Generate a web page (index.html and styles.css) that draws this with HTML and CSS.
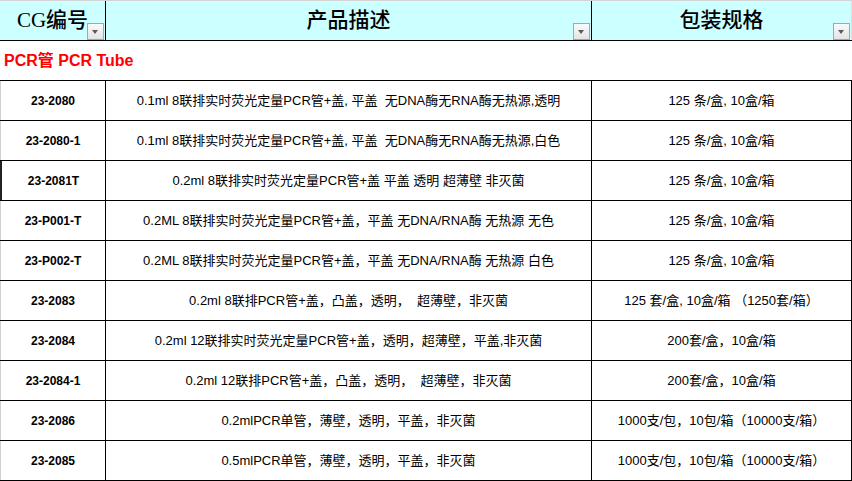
FILE: index.html
```html
<!DOCTYPE html>
<html lang="zh">
<head>
<meta charset="utf-8">
<title>PCR Tube</title>
<link rel="stylesheet" href="styles.css">
</head>
<body>
<div class="sheet">
  <div class="row head">
    <div class="cell c1"><span>CG编号</span><i class="dd"></i></div>
    <div class="cell c2"><span>产品描述</span><i class="dd"></i></div>
    <div class="cell c3"><span>包装规格</span><i class="dd"></i></div>
  </div>
  <div class="row title"><div class="cell span">PCR管 PCR Tube</div></div>
  <div class="row"><div class="cell c1 code">23-2080</div><div class="cell c2">0.1ml 8联排实时荧光定量PCR管+盖, 平盖&nbsp; 无DNA酶无RNA酶无热源,透明</div><div class="cell c3">125 条/盒, 10盒/箱</div></div>
  <div class="row"><div class="cell c1 code">23-2080-1</div><div class="cell c2">0.1ml 8联排实时荧光定量PCR管+盖, 平盖&nbsp; 无DNA酶无RNA酶无热源,白色</div><div class="cell c3">125 条/盒, 10盒/箱</div></div>
  <div class="row"><div class="cell c1 code dark">23-2081T</div><div class="cell c2">0.2ml 8联排实时荧光定量PCR管+盖 平盖 透明 超薄壁 非灭菌</div><div class="cell c3">125 条/盒, 10盒/箱</div></div>
  <div class="row"><div class="cell c1 code">23-P001-T</div><div class="cell c2">0.2ML 8联排实时荧光定量PCR管+盖，平盖 无DNA/RNA酶 无热源 无色</div><div class="cell c3">125 条/盒, 10盒/箱</div></div>
  <div class="row"><div class="cell c1 code">23-P002-T</div><div class="cell c2">0.2ML 8联排实时荧光定量PCR管+盖，平盖 无DNA/RNA酶 无热源 白色</div><div class="cell c3">125 条/盒, 10盒/箱</div></div>
  <div class="row"><div class="cell c1 code">23-2083</div><div class="cell c2">0.2ml 8联排PCR管+盖，凸盖，透明，&nbsp; 超薄壁，非灭菌</div><div class="cell c3">125 套/盒, 10盒/箱 （1250套/箱）</div></div>
  <div class="row"><div class="cell c1 code">23-2084</div><div class="cell c2">0.2ml 12联排实时荧光定量PCR管+盖，透明，超薄壁，平盖,非灭菌</div><div class="cell c3">200套/盒，10盒/箱</div></div>
  <div class="row"><div class="cell c1 code">23-2084-1</div><div class="cell c2">0.2ml 12联排PCR管+盖，凸盖，透明，&nbsp; 超薄壁，非灭菌</div><div class="cell c3">200套/盒，10盒/箱</div></div>
  <div class="row"><div class="cell c1 code">23-2086</div><div class="cell c2">0.2mlPCR单管，薄壁，透明，平盖，非灭菌</div><div class="cell c3">1000支/包，10包/箱（10000支/箱）</div></div>
  <div class="row"><div class="cell c1 code">23-2085</div><div class="cell c2">0.5mlPCR单管，薄壁，透明，平盖，非灭菌</div><div class="cell c3">1000支/包，10包/箱（10000支/箱）</div></div>
</div>
</body>
</html>
```
FILE: styles.css
```css
html, body {
  margin: 0;
  padding: 0;
  background: #ffffff;
}
.sheet {
  width: 852px;
  border-top: 1px solid #d4d4d4;
  font-family: "Liberation Sans", "Noto Sans CJK SC", sans-serif;
  font-size: 13px;
  color: #000;
}
.row {
  display: grid;
  grid-template-columns: 106px 486px 260px;
  height: 40px;
  box-sizing: border-box;
  border-bottom: 1px solid #000;
}
.cell {
  display: flex;
  align-items: center;
  justify-content: center;
  box-sizing: border-box;
  line-height: 1;
  white-space: nowrap;
  border-right: 1px solid #000;
}
.row .c1 {
  border-left: 1px solid #d0d0d0;
}
.row .c1.dark {
  border-left: 2px solid #222;
}
.row .c3 {
  border-right: 1px solid #000;
}
.code {
  font-weight: bold;
  font-size: 12px;
}
.head {
  background: #ccffff;
}
.head .cell {
  position: relative;
  font-family: "Liberation Serif", "Noto Sans CJK SC", serif;
  font-size: 21px;
  font-weight: 500;
  padding-bottom: 1px;
}
.head .c1 {
  border-left: none;
}
.head .c3 {
  border-right: 1px solid #e0e0e0;
}
.dd {
  position: absolute;
  right: 1px;
  bottom: 0;
  width: 17px;
  height: 17px;
  box-sizing: border-box;
  border: 1px solid #a6a6a6;
  background: linear-gradient(#fafafa, #e4e4e4);
}
.dd::after {
  content: "";
  position: absolute;
  left: 4px;
  top: 6px;
  border-left: 3.5px solid transparent;
  border-right: 3.5px solid transparent;
  border-top: 4px solid #5a5a5a;
}
.title {
  grid-template-columns: 852px;
}
.title .span {
  border: none;
  justify-content: flex-start;
  padding-left: 4px;
  color: #ff0000;
  font-weight: bold;
  font-size: 16px;
}
```
